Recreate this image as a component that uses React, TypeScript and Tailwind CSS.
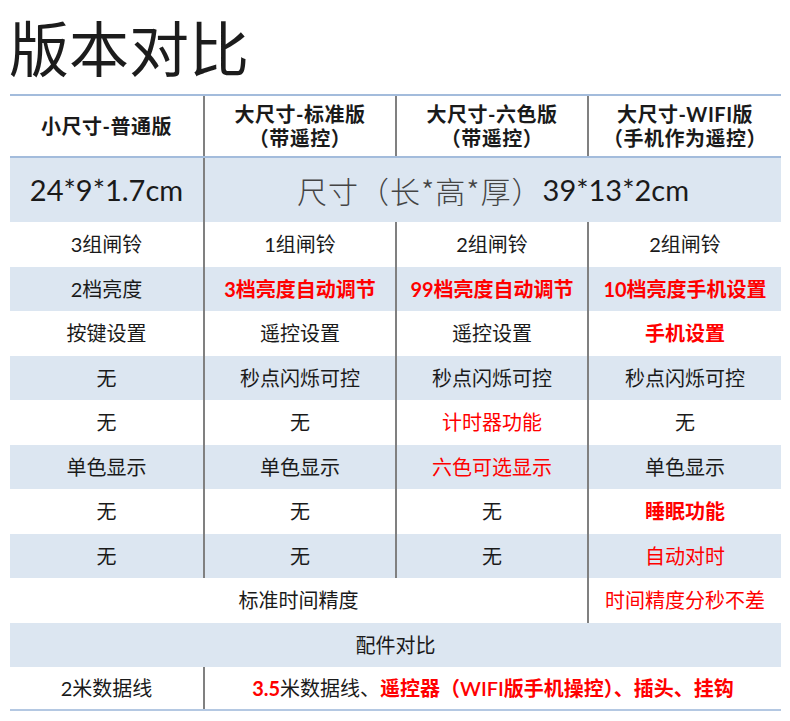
const font = "font-['Lato','Noto_Sans_CJK_SC',sans-serif]"

type Cell = { text: string; red?: boolean; bold?: boolean }

const rows: Cell[][] = [
  [{ text: "3组闸铃" }, { text: "1组闸铃" }, { text: "2组闸铃" }, { text: "2组闸铃" }],
  [
    { text: "2档亮度" },
    { text: "3档亮度自动调节", red: true, bold: true },
    { text: "99档亮度自动调节", red: true, bold: true },
    { text: "10档亮度手机设置", red: true, bold: true },
  ],
  [{ text: "按键设置" }, { text: "遥控设置" }, { text: "遥控设置" }, { text: "手机设置", red: true, bold: true }],
  [{ text: "无" }, { text: "秒点闪烁可控" }, { text: "秒点闪烁可控" }, { text: "秒点闪烁可控" }],
  [{ text: "无" }, { text: "无" }, { text: "计时器功能", red: true }, { text: "无" }],
  [{ text: "单色显示" }, { text: "单色显示" }, { text: "六色可选显示", red: true }, { text: "单色显示" }],
  [{ text: "无" }, { text: "无" }, { text: "无" }, { text: "睡眠功能", red: true, bold: true }],
  [{ text: "无" }, { text: "无" }, { text: "无" }, { text: "自动对时", red: true }],
]

const headers = [
  ["小尺寸-普通版"],
  ["大尺寸-标准版", "（带遥控）"],
  ["大尺寸-六色版", "（带遥控）"],
  ["大尺寸-WIFI版", "（手机作为遥控）"],
]

const grid = "grid grid-cols-[193px_192px_192px_194px]"
const divider = "border-l-2 border-[#808080]"

export default function App() {
  return (
    <div className={`w-[790px] h-[721px] bg-white text-[#1a1a1a] ${font}`}>
      <div className="h-[94px] flex items-center pl-[9px] pb-[3px]">
        <h1 className="text-[60px] leading-none font-['Noto_Sans_CJK_SC',sans-serif] text-[#1c1c1c]">版本对比</h1>
      </div>

      <div className="ml-[10px] w-[771px]">
        {/* header */}
        <div className={`${grid} h-[64px] border-t-2 border-b-2 border-[#a3bcdc]`}>
          {headers.map((lines, i) => (
            <div
              key={i}
              className={`flex flex-col items-center justify-center text-[20px] leading-[24px] font-bold ${i > 0 ? divider : ""}`}
            >
              {lines.map((l) => (
                <span key={l} className="tracking-[0.5px]">
                  {l}
                </span>
              ))}
            </div>
          ))}
        </div>

        {/* size row */}
        <div className={`${grid} h-[64px] bg-[#dce6f1]`}>
          <div className="flex items-center justify-center text-[29px] text-[#1a1a1a]">24*9*1.7cm</div>
          <div className={`col-span-3 flex items-center justify-center text-[29px] ${divider}`}>
            <span className="text-[30px] tracking-[1px] text-[#444] font-light font-['Noto_Sans_CJK_SC',sans-serif]">
              尺寸（长*高*厚）
            </span>
            <span className="text-[#1a1a1a]">39*13*2cm</span>
          </div>
        </div>

        {rows.map((row, r) => (
          <div key={r} className={`${grid} h-[44.5px] ${r % 2 === 1 ? "bg-[#dce6f1]" : "bg-white"}`}>
            {row.map((c, i) => (
              <div
                key={i}
                className={`flex items-center justify-center text-[20px] ${i > 0 ? divider : ""} ${
                  c.red ? "text-[#ff0000]" : ""
                } ${c.bold ? "font-bold" : ""}`}
              >
                {c.text}
              </div>
            ))}
          </div>
        ))}

        <div className={`${grid} h-[44.5px] bg-white`}>
          <div className="col-span-3 flex items-center justify-center text-[20px]">标准时间精度</div>
          <div className={`flex items-center justify-center text-[20px] text-[#ff0000] ${divider}`}>时间精度分秒不差</div>
        </div>

        <div className="h-[44.5px] bg-[#dce6f1] flex items-center justify-center text-[20px]">配件对比</div>

        <div className={`${grid} h-[44px] bg-white border-b-2 border-[#b4c8e2]`}>
          <div className="flex items-center justify-center text-[20px]">2米数据线</div>
          <div className={`col-span-3 flex items-center justify-center text-[20px] ${divider}`}>
            <span className="text-[#ff0000] font-bold">3.5</span>
            <span>米数据线、</span>
            <span className="text-[#ff0000] font-semibold">遥控器（WIFI版手机操控）、插头、挂钩</span>
          </div>
        </div>
      </div>
    </div>
  )
}
